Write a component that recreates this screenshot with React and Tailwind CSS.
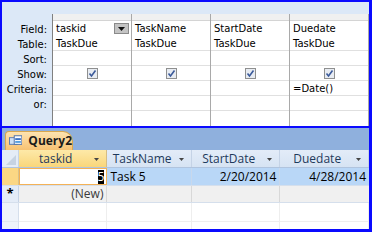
import React from "react";

const Check = () => (
  <div className="w-[11px] h-[11px] border border-[#8e8f8f] bg-[#e8ecf2] flex items-center justify-center">
    <svg width="9" height="9" viewBox="0 0 9 9">
      <path d="M1.5 4.5 L3.5 7 L7.5 1.5" stroke="#3b5a9a" strokeWidth="1.6" fill="none" />
    </svg>
  </div>
);

const Arrow = ({ c = "#444" }) => (
  <svg width="5" height="3" viewBox="0 0 5 3"><path d="M0 0 H5 L2.5 3 Z" fill={c} /></svg>
);

const cols = [
  { field: "taskid", dd: true, crit: "" },
  { field: "TaskName", crit: "" },
  { field: "StartDate", crit: "" },
  { field: "Duedate", crit: "=Date()" },
];

export default function App() {
  const gf = { fontFamily: '"DejaVu Sans", sans-serif' };
  const df = { fontFamily: '"Open Sans", sans-serif' };
  return (
    <div className="w-[372px] h-[232px] border-l-2 border-t-2 border-r-[3px] border-b-[3px] border-[#0a0aff] bg-white flex flex-col overflow-hidden">
      {/* Query design pane */}
      <div className="h-[124px] bg-[#dce8f7] flex pt-[12px] text-[10px] text-black" style={gf}>
        <div className="w-[50px] flex flex-col items-end pr-[5px] pt-[8px] leading-[15px]">
          <div className="h-[15px]">Field:</div>
          <div className="h-[15px]">Table:</div>
          <div className="h-[15px]">Sort:</div>
          <div className="h-[15px]">Show:</div>
          <div className="h-[15px]">Criteria:</div>
          <div className="h-[15px]">or:</div>
        </div>
        <div className="flex border-l border-[#808080] bg-white">
          {cols.map((c, i) => (
            <div key={i} className="w-[79px] flex flex-col border-r border-[#a9a9a9]">
              <div className="h-[7px] bg-[#f0f0f0] border-b border-[#d4d4d4]" />
              <div className="h-[15px] flex items-center pl-[3px] justify-between pr-[2px]">
                <span>{c.field}</span>
                {c.dd && (
                  <div className="w-[15px] h-[11px] bg-[#c4c4c4] border border-[#8a8a8a] flex items-end justify-center pb-[2px]">
                    <svg width="7" height="4" viewBox="0 0 7 4"><path d="M0 0 H7 L3.5 4 Z" fill="#111" /></svg>
                  </div>
                )}
              </div>
              <div className="h-[15px] flex items-center pl-[3px] border-b border-[#e0e0e0]">TaskDue</div>
              <div className="h-[15px] border-b border-[#e0e0e0]" />
              <div className="h-[15px] flex items-center justify-center border-b border-[#e0e0e0]"><Check /></div>
              <div className="h-[15px] flex items-center pl-[3px] border-b border-[#e0e0e0]">{c.crit}</div>
              <div className="h-[15px] border-b border-[#e0e0e0]" />
              <div className="flex-1" />
            </div>
          ))}
        </div>
      </div>
      <div className="h-[2px] bg-[#0a0aff]" />
      {/* Datasheet */}
      <div className="flex-1 flex flex-col" style={df}>
        <div className="h-[22px] bg-[#8fb0dd] flex items-end pl-[3px]">
          <div className="h-[19px] w-[68px] rounded-tl-[4px] rounded-tr-[10px] bg-gradient-to-b from-[#fde3b0] to-[#f7c272] border border-[#d9a74e] border-b-0 flex items-center gap-[6px] pl-[3px]">
            <svg width="14" height="12" viewBox="0 0 14 12">
              <rect x="0.5" y="2.5" width="8" height="7" fill="#cfe0f5" stroke="#5a7bb0" />
              <rect x="5.5" y="0.5" width="8" height="9" fill="#fff" stroke="#4b6ea8" />
              <rect x="6.5" y="3" width="6" height="2" fill="#3d72c4" />
              <rect x="6.5" y="6" width="6" height="2" fill="#58a0e0" />
            </svg>
            <span className="text-[12px] font-bold text-[#1b1b1b]">Query2</span>
          </div>
        </div>
        <div className="h-[18px] flex text-[12px] text-[#1e395b] border-b border-[#b0c4de]">
          <div className="w-[17px] bg-[#e4ecf7] border-r border-[#c5d3e6] relative">
            <svg className="absolute right-[2px] bottom-[2px]" width="10" height="10" viewBox="0 0 10 10"><path d="M10 0 V10 H0 Z" fill="#c6d3e3" /></svg>
          </div>
          <div className="w-[89px] bg-gradient-to-b from-[#fde9a8] to-[#f9d67a] border-r border-[#d5bd84] flex items-center justify-center pr-[14px] relative">
            <span>taskid</span>
            <div className="absolute right-[7px] top-[8px] flex"><Arrow /></div>
          </div>
          {[["TaskName", 85], ["StartDate", 89], ["Duedate", 89]].map(([t, w]) => (
            <div key={t} style={{ width: w }} className="bg-gradient-to-b from-[#e3ecf8] to-[#d6e3f3] border-r border-[#c5d3e6] flex items-center justify-center pr-[14px] relative whitespace-nowrap">
              <span>{t}</span>
              <div className="absolute right-[7px] top-[8px] flex"><Arrow /></div>
            </div>
          ))}
        </div>
        <div className="h-[18px] flex text-[12px] text-black border-b border-[#d5dfec]">
          <div className="w-[17px] bg-[#fbd784] border-r border-[#d9c28a]" />
          <div className="w-[89px] bg-white border border-[#f4b256] flex items-center justify-end pr-[2px]">
            <span className="bg-black text-white leading-[14px]">5</span>
          </div>
          <div className="w-[85px] bg-[#b9d7f7] border-r border-[#c8d8ec] flex items-center pl-[3px]">Task 5</div>
          <div className="w-[89px] bg-[#b9d7f7] border-r border-[#c8d8ec] flex items-center justify-end pr-[3px]">2/20/2014</div>
          <div className="w-[89px] bg-[#b9d7f7] flex items-center justify-end pr-[3px]">4/28/2014</div>
        </div>
        <div className="h-[17px] flex text-[12px] text-[#3a3a3a] border-b border-[#d5dfec]">
          <div className="w-[17px] bg-[#e4ecf7] border-r border-[#c5d3e6] flex items-center justify-center text-black text-[13px] font-bold">*</div>
          <div className="w-[89px] bg-[#f0f0f0] border-r border-[#d8d8d8] flex items-center justify-end pr-[3px]">(New)</div>
          <div className="w-[85px] bg-[#f0f0f0] border-r border-[#d8d8d8]" />
          <div className="w-[89px] bg-[#f0f0f0] border-r border-[#d8d8d8]" />
          <div className="w-[89px] bg-[#f0f0f0]" />
        </div>
        <div className="flex-1 flex">
          <div className="w-[17px] bg-[#eef3fa] border-r border-[#d5dfec] flex flex-col">
            <div className="h-[19px] border-b border-[#e2e8f0]" />
          </div>
          {[89, 85, 89, 89].map((w, i) => (
            <div key={i} style={{ width: w }} className="border-r border-[#eeeeee] flex flex-col">
              <div className="h-[19px] border-b border-[#eeeeee]" />
            </div>
          ))}
        </div>
      </div>
    </div>
  );
}
